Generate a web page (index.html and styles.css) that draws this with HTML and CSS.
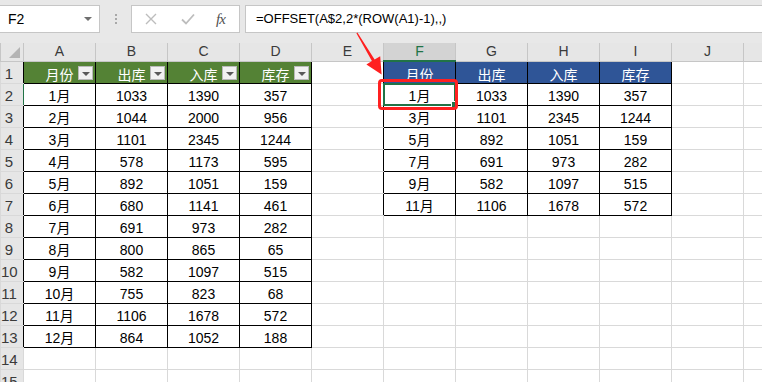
FILE: index.html
```html
<!DOCTYPE html>
<html lang="zh-CN">
<head>
  <meta charset="UTF-8">
  <title>OFFSET 隔行取数</title>
  <link rel="stylesheet" href="styles.css">
</head>
<body>

<!-- 编辑栏 -->
<div class="formula-bar">
  <div class="name-box">
    <span>F2</span>
    <i class="caret"></i>
  </div>
  <div class="grip"><i></i><i></i><i></i></div>
  <div class="fx-box">
    <svg class="icon" width="12" height="12" viewBox="0 0 12 12"><path d="M1 1L11 11M11 1L1 11" stroke="#bdbdbd" stroke-width="1.4" fill="none"/></svg>
    <svg class="icon" width="14" height="12" viewBox="0 0 14 12"><path d="M1 6.5L5 10.5L13 1.5" stroke="#bdbdbd" stroke-width="1.8" fill="none"/></svg>
    <span class="fx">fx</span>
  </div>
  <div class="formula-input">=OFFSET(A$2,2*(ROW(A1)-1),,)</div>
</div>

<!-- 工作表 -->
<table class="sheet">
  <colgroup>
    <col class="c-rh">
    <col><col><col><col><col><col><col><col><col><col><col>
  </colgroup>
  <tr class="col-heads">
    <th class="corner"><i></i></th>
    <th>A</th><th>B</th><th>C</th><th>D</th><th>E</th>
    <th class="sel">F</th><th>G</th><th>H</th><th>I</th><th>J</th><th></th>
  </tr>
  <tr>
    <th class="rh in">1</th>
    <td class="t gh">月份<b class="filter"></b></td>
    <td class="t gh">出库<b class="filter"></b></td>
    <td class="t gh">入库<b class="filter"></b></td>
    <td class="t gh">库存<b class="filter"></b></td>
    <td class="edge"></td>
    <td class="t bh">月份</td><td class="t bh">出库</td><td class="t bh">入库</td><td class="t bh">库存</td>
    <td></td><td></td>
  </tr>
  <tr>
    <th class="rh in cur">2</th>
    <td class="t">1月</td><td class="t">1033</td><td class="t">1390</td><td class="t">357</td>
    <td class="edge"></td>
    <td class="t active">1月<div class="select-box"><i></i></div><div class="mark"></div></td>
    <td class="t">1033</td><td class="t">1390</td><td class="t">357</td>
    <td></td><td></td>
  </tr>
  <tr>
    <th class="rh in">3</th>
    <td class="t">2月</td><td class="t">1044</td><td class="t">2000</td><td class="t">956</td>
    <td class="edge"></td>
    <td class="t">3月</td><td class="t">1101</td><td class="t">2345</td><td class="t">1244</td>
    <td></td><td></td>
  </tr>
  <tr>
    <th class="rh in">4</th>
    <td class="t">3月</td><td class="t">1101</td><td class="t">2345</td><td class="t">1244</td>
    <td class="edge"></td>
    <td class="t">5月</td><td class="t">892</td><td class="t">1051</td><td class="t">159</td>
    <td></td><td></td>
  </tr>
  <tr>
    <th class="rh in">5</th>
    <td class="t">4月</td><td class="t">578</td><td class="t">1173</td><td class="t">595</td>
    <td class="edge"></td>
    <td class="t">7月</td><td class="t">691</td><td class="t">973</td><td class="t">282</td>
    <td></td><td></td>
  </tr>
  <tr>
    <th class="rh in">6</th>
    <td class="t">5月</td><td class="t">892</td><td class="t">1051</td><td class="t">159</td>
    <td class="edge"></td>
    <td class="t">9月</td><td class="t">582</td><td class="t">1097</td><td class="t">515</td>
    <td></td><td></td>
  </tr>
  <tr>
    <th class="rh in">7</th>
    <td class="t">6月</td><td class="t">680</td><td class="t">1141</td><td class="t">461</td>
    <td class="edge"></td>
    <td class="t">11月</td><td class="t">1106</td><td class="t">1678</td><td class="t">572</td>
    <td></td><td></td>
  </tr>
  <tr>
    <th class="rh in">8</th>
    <td class="t">7月</td><td class="t">691</td><td class="t">973</td><td class="t">282</td>
    <td></td><td></td><td></td><td></td><td></td><td></td><td></td>
  </tr>
  <tr>
    <th class="rh in">9</th>
    <td class="t">8月</td><td class="t">800</td><td class="t">865</td><td class="t">65</td>
    <td></td><td></td><td></td><td></td><td></td><td></td><td></td>
  </tr>
  <tr>
    <th class="rh in">10</th>
    <td class="t">9月</td><td class="t">582</td><td class="t">1097</td><td class="t">515</td>
    <td></td><td></td><td></td><td></td><td></td><td></td><td></td>
  </tr>
  <tr>
    <th class="rh in">11</th>
    <td class="t">10月</td><td class="t">755</td><td class="t">823</td><td class="t">68</td>
    <td></td><td></td><td></td><td></td><td></td><td></td><td></td>
  </tr>
  <tr>
    <th class="rh in">12</th>
    <td class="t">11月</td><td class="t">1106</td><td class="t">1678</td><td class="t">572</td>
    <td></td><td></td><td></td><td></td><td></td><td></td><td></td>
  </tr>
  <tr>
    <th class="rh in">13</th>
    <td class="t">12月</td><td class="t">864</td><td class="t">1052</td><td class="t">188</td>
    <td></td><td></td><td></td><td></td><td></td><td></td><td></td>
  </tr>
  <tr>
    <th class="rh">14</th>
    <td></td><td></td><td></td><td></td><td></td><td></td><td></td><td></td><td></td><td></td><td></td>
  </tr>
  <tr>
    <th class="rh">15</th>
    <td></td><td></td><td></td><td></td><td></td><td></td><td></td><td></td><td></td><td></td><td></td>
  </tr>
</table>

<!-- 红色箭头标注 -->
<svg class="arrow" width="40" height="52" viewBox="350 28 40 52">
  <polygon fill="#ff1f1f" points="357.4,32.6 374.6,59.4 380.2,56.2 381.6,74.5 366.4,64.4 371.9,61.1 356.4,33.3"/>
</svg>

</body>
</html>
```

FILE: styles.css
```css
body {
  margin: 0;
  width: 762px;
  height: 382px;
  overflow: hidden;
  position: relative;
  background: #fff;
  font-family: "Liberation Sans", "Noto Sans CJK SC", sans-serif;
  color: #000;
}

/* 编辑栏 */
.formula-bar {
  display: flex;
  align-items: flex-start;
  height: 43px;
  box-sizing: border-box;
  padding-top: 5px;
  background: #e8e8e8;
}
.name-box {
  width: 101px;
  height: 28px;
  box-sizing: border-box;
  margin-left: -1px;
  border: 1px solid #c6c6c6;
  background: #fff;
  display: flex;
  align-items: center;
  justify-content: space-between;
  padding: 0 7px 0 8px;
  font-size: 14px;
}
.caret {
  width: 0;
  height: 0;
  border-left: 4px solid transparent;
  border-right: 4px solid transparent;
  border-top: 4px solid #6f6f6f;
}
.grip {
  width: 31px;
  height: 28px;
  display: flex;
  flex-direction: column;
  align-items: center;
  justify-content: center;
  gap: 2px;
}
.grip i {
  width: 2px;
  height: 2px;
  background: #a8a8a8;
}
.fx-box {
  width: 109px;
  height: 28px;
  box-sizing: border-box;
  border: 1px solid #c6c6c6;
  background: #fff;
  display: flex;
  align-items: center;
  padding-left: 13px;
}
.fx-box .icon:first-child {
  margin-right: 24px;
}
.fx-box .icon + .icon {
  margin-right: 21px;
}
.fx {
  font-family: "Liberation Serif", serif;
  font-style: italic;
  font-size: 15px;
  color: #505050;
  letter-spacing: -1px;
}
.formula-input {
  flex: 1;
  height: 28px;
  box-sizing: border-box;
  margin-left: 5px;
  margin-right: -2px;
  border: 1px solid #c6c6c6;
  background: #fff;
  padding-left: 10px;
  font-size: 13px;
  line-height: 26px;
}

/* 工作表 */
.sheet {
  border-collapse: collapse;
  table-layout: fixed;
  width: 815px;
}
.sheet col {
  width: 72px;
}
.sheet col.c-rh {
  width: 23px;
}
.sheet th,
.sheet td {
  padding: 0;
  border: 1px solid #d9d9d9;
  font-weight: normal;
  white-space: nowrap;
  overflow: visible;
}
.sheet td {
  height: 21px;
  font-size: 14px;
  text-align: center;
  vertical-align: bottom;
  line-height: 18px;
}
.col-heads th {
  height: 17px;
  background: #e6e6e6;
  border-color: #c6c6c6;
  border-top: none;
  font-size: 14px;
  line-height: 17px;
  color: #3a3a3a;
}
.col-heads th.sel {
  background: #d3d3d3;
  color: #217346;
  border-bottom: 2px solid #217346;
}
.corner {
  position: relative;
}
.corner i {
  position: absolute;
  right: 3px;
  bottom: 3px;
  width: 0;
  height: 0;
  border-left: 11px solid transparent;
  border-bottom: 11px solid #b4b4b4;
}
.rh {
  background: #e6e6e6;
  border-color: #c6c6c6;
  border-left: none;
  font-size: 15px;
  color: #3a3a3a;
  text-align: center;
  vertical-align: bottom;
  line-height: 19px;
  padding: 0 6px 0 0 !important;
}
.rh.in {
  border-right-color: #000;
}
.rh.cur {
  border-right-color: #217346;
}
.edge {
  border-right-color: #000 !important;
}

/* 数据表 */
.t {
  border: 1px solid #000 !important;
}
.gh,
.bh {
  color: #fff;
  font-family: "Noto Sans CJK SC", sans-serif;
  font-weight: bold;
  font-size: 14px;
  vertical-align: middle;
  position: relative;
}
.gh {
  background: #548235;
}
.bh {
  background: #2f5597;
}
.filter {
  position: absolute;
  right: 2px;
  top: 4px;
  width: 15px;
  height: 14px;
  box-sizing: border-box;
  border: 1px solid #b9b9b9;
  background: #f1f1f1;
}
.filter::after {
  content: "";
  position: absolute;
  left: 3px;
  top: 5px;
  border-left: 4px solid transparent;
  border-right: 4px solid transparent;
  border-top: 4px solid #595959;
}

/* 选中单元格与标注 */
.active {
  position: relative;
}
.select-box {
  position: absolute;
  left: -1px;
  top: -1px;
  right: -1px;
  bottom: -1px;
  border: 2px solid #217346;
}
.select-box i {
  position: absolute;
  right: -4px;
  bottom: -4px;
  width: 5px;
  height: 5px;
  background: #217346;
  border: 1px solid #fff;
}
.mark {
  position: absolute;
  left: -6px;
  top: -5px;
  width: 80px;
  height: 31px;
  box-sizing: border-box;
  border: 3px solid #ff2020;
  border-radius: 4px;
}
.arrow {
  position: absolute;
  left: 350px;
  top: 28px;
}
```
